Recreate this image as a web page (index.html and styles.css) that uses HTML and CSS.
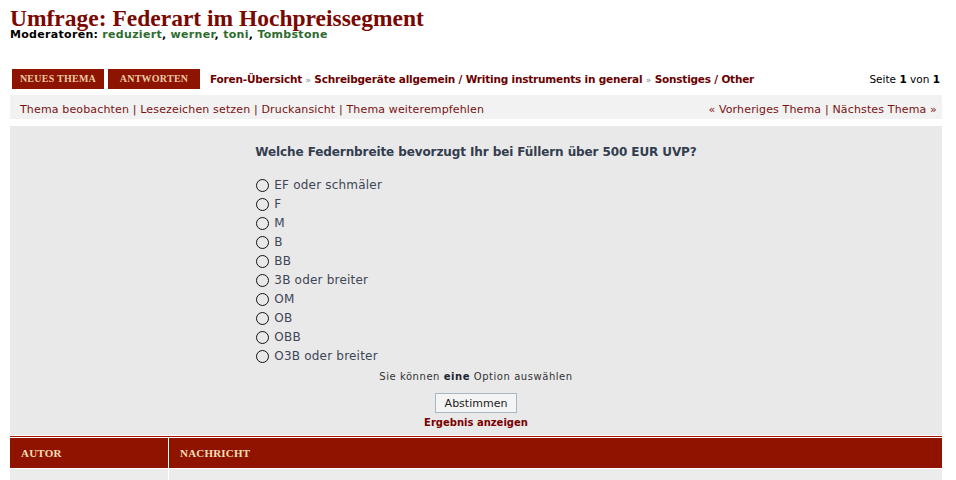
FILE: index.html
```html
<!DOCTYPE html>
<html lang="de">
<head>
<meta charset="utf-8">
<title>Umfrage: Federart im Hochpreissegment</title>
<link rel="stylesheet" href="styles.css">
</head>
<body>
<div class="page">
  <header class="topic-head">
    <h2 class="topic-title">Umfrage: Federart im Hochpreissegment</h2>
    <p class="mods"><b>Moderatoren:</b> <a class="mod" href="#">reduziert</a>, <a class="mod" href="#">werner</a>, <a class="mod" href="#">toni</a>, <a class="mod" href="#">Tombstone</a></p>
  </header>

  <div class="navrow">
    <a class="btn" href="#">NEUES THEMA</a>
    <a class="btn" href="#">ANTWORTEN</a>
    <nav class="crumbs">
      <a href="#">Foren-Übersicht</a> <span class="sep">»</span> <a href="#">Schreibgeräte allgemein / Writing instruments in general</a> <span class="sep">»</span> <a href="#">Sonstiges / Other</a>
    </nav>
    <div class="pages">Seite <b>1</b> von <b>1</b></div>
  </div>

  <div class="linkbar">
    <div class="links-left"><a href="#">Thema beobachten</a> | <a href="#">Lesezeichen setzen</a> | <a href="#">Druckansicht</a> | <a href="#">Thema weiterempfehlen</a></div>
    <div class="links-right"><a href="#">« Vorheriges Thema</a> | <a href="#">Nächstes Thema »</a></div>
  </div>

  <section class="poll">
    <div class="poll-inner">
      <h3 class="question">Welche Federnbreite bevorzugt Ihr bei Füllern über 500 EUR UVP?</h3>
      <ul class="options">
        <li><label><input type="radio" name="v"> EF oder schmäler</label></li>
        <li><label><input type="radio" name="v"> F</label></li>
        <li><label><input type="radio" name="v"> M</label></li>
        <li><label><input type="radio" name="v"> B</label></li>
        <li><label><input type="radio" name="v"> BB</label></li>
        <li><label><input type="radio" name="v"> 3B oder breiter</label></li>
        <li><label><input type="radio" name="v"> OM</label></li>
        <li><label><input type="radio" name="v"> OB</label></li>
        <li><label><input type="radio" name="v"> OBB</label></li>
        <li><label><input type="radio" name="v"> O3B oder breiter</label></li>
      </ul>
    </div>
    <p class="note">Sie können <b>eine</b> Option auswählen</p>
    <button class="vote" type="button">Abstimmen</button>
    <a class="results" href="#">Ergebnis anzeigen</a>
  </section>

  <div class="rule"></div>
  <div class="thead">
    <div class="th th-author">AUTOR</div>
    <div class="th th-msg">NACHRICHT</div>
  </div>
  <div class="trow">
    <div class="td td-author"></div>
    <div class="td td-msg"></div>
  </div>
</div>
</body>
</html>
```

FILE: styles.css
```css
html, body {
  margin: 0;
  padding: 0;
  background: #ffffff;
}
body {
  font-family: "DejaVu Sans", Verdana, sans-serif;
  font-size: 11px;
  color: #323d4f;
}
a { text-decoration: none; }

.page {
  width: 932px;
  padding: 0 0 0 10px;
}

.topic-head {
  padding-top: 7px;
}
.topic-title {
  margin: 0;
  font-family: "Liberation Serif", "Times New Roman", serif;
  font-size: 23.5px;
  font-weight: bold;
  line-height: 22px;
  color: #7a0800;
}
.mods {
  margin: 0;
  font-size: 11px;
  line-height: 12px;
  color: #000;
  font-weight: bold;
  letter-spacing: 0.3px;
}
.mod {
  color: #2f6b2f;
}

.navrow {
  display: flex;
  align-items: center;
  margin-top: 27px;
  height: 20px;
  padding-top: 1px;
}
.btn {
  display: flex;
  align-items: center;
  justify-content: center;
  height: 20px;
  width: 92px;
  margin-left: 2px;
  margin-right: 2px;
  margin-top: -1px;
  background: #8c1400;
  color: #efc9a7;
  font-family: "Liberation Serif", "Times New Roman", serif;
  font-weight: bold;
  font-size: 10px;
  letter-spacing: 0.25px;
}
.crumbs {
  margin-left: 8px;
  font-weight: bold;
  font-size: 10.5px;
  letter-spacing: -0.2px;
  flex: 1;
}
.crumbs a { color: #6a0000; }
.crumbs .sep { color: #888; font-weight: normal; font-size: 9px; }
.pages {
  color: #000;
  font-size: 10.5px;
  padding-right: 2px;
}

.linkbar {
  display: flex;
  justify-content: space-between;
  align-items: center;
  box-sizing: border-box;
  margin-top: 6px;
  height: 24px;
  padding: 4px 5px 0 10px;
  background: #f2f2f2;
  font-size: 11px;
  letter-spacing: 0.15px;
  color: #6a1111;
}
.linkbar a { color: #7a1111; }

.poll {
  margin-top: 7px;
  background: #e9e9e9;
  height: 309px;
  display: flex;
  flex-direction: column;
  align-items: center;
}
.poll-inner {
  padding-top: 18px;
}
.question {
  margin: 0;
  font-size: 12px;
  font-weight: bold;
  line-height: 16px;
  color: #323d4f;
  letter-spacing: -0.1px;
}
.options {
  list-style: none;
  margin: 16px 0 0 1px;
  padding: 0;
}
.options li {
  height: 19px;
  line-height: 19px;
  font-size: 12px;
  color: #3d4556;
  letter-spacing: 0.2px;
}
.options label {
  display: flex;
  align-items: center;
}
.options input {
  appearance: none;
  -webkit-appearance: none;
  margin: 0 5px 0 0;
  width: 13px;
  height: 13px;
  border: 1.5px solid #111;
  border-radius: 50%;
  background: transparent;
  box-sizing: border-box;
}
.note {
  margin: 5px 0 0 0;
  font-size: 10px;
  line-height: 12px;
  color: #333;
  letter-spacing: 0.55px;
}
.note b { color: #1d2433; }
.vote {
  margin-top: 10px;
  height: 20px;
  width: 82px;
  padding: 0;
  background: #f4f4f4;
  border: 1px solid #a8b6c6;
  font-family: "DejaVu Sans", Verdana, sans-serif;
  font-size: 11px;
  color: #222;
}
.results {
  margin-top: 3px;
  font-weight: bold;
  font-size: 10px;
  line-height: 14px;
  color: #7a0000;
}

.rule {
  margin-top: 1px;
  height: 1px;
  background: #a81400;
}
.thead {
  display: flex;
  margin-top: 1px;
  height: 30px;
  background: #901300;
}
.th {
  display: flex;
  align-items: center;
  padding-left: 11px;
  font-family: "Liberation Serif", "Times New Roman", serif;
  font-weight: bold;
  font-size: 11px;
  letter-spacing: 0.2px;
  color: #f3dfb8;
}
.th-author {
  width: 147px;
  border-right: 1px solid #ffffff;
}
.th-msg { flex: 1; }
.trow {
  display: flex;
  margin-top: 1px;
  height: 20px;
}
.td { background: #ececec; }
.td-author {
  width: 158px;
  border-right: 1px solid #ffffff;
}
.td-msg { flex: 1; }
```
